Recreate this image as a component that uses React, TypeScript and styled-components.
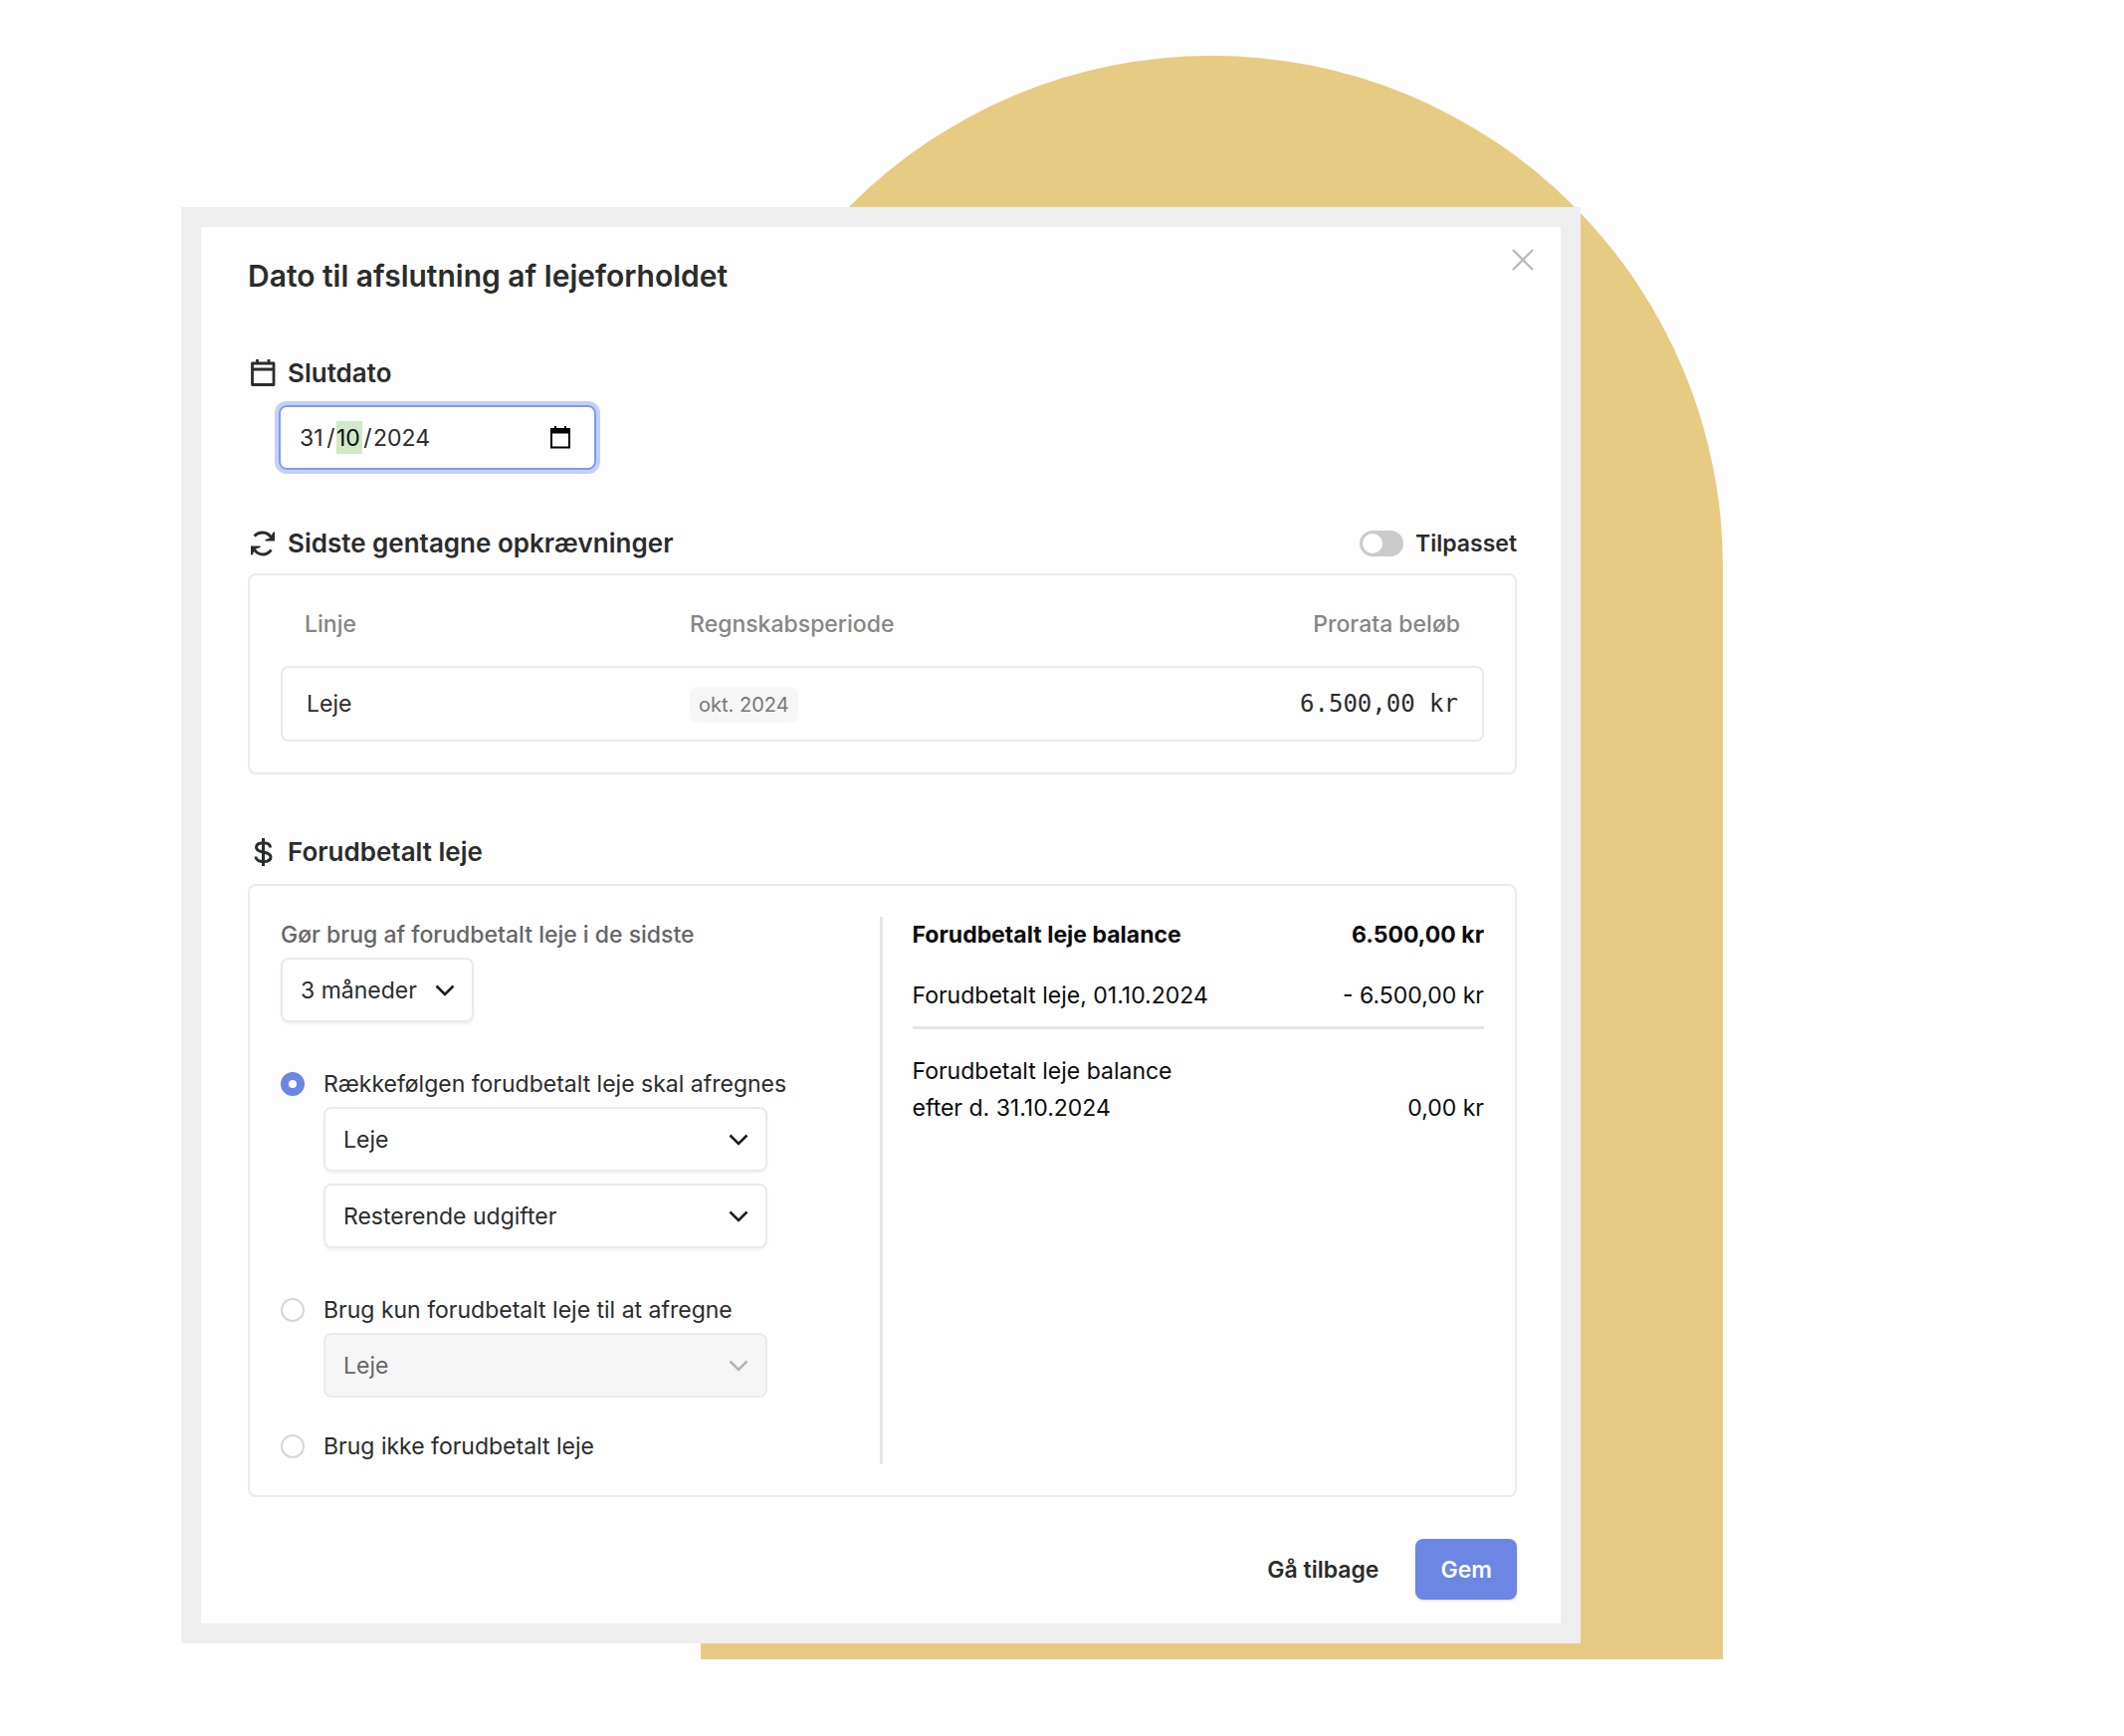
import React, { useId, useState } from "react";
import styled, { createGlobalStyle, css } from "styled-components";

const color = {
  ink: "#2b2c2c",
  black: "#0c0c0c",
  muted: "#868686",
  soft: "#666666",
  line: "#eaeaea",
  rule: "#e5e5e5",
  accent: "#6b86e3",
  frame: "#eeeeee",
  sand: "#e7cb83",
  tint: "#f6f6f6",
};

const GlobalStyle = createGlobalStyle`
  *, *::before, *::after { box-sizing: border-box; }
  body {
    margin: 0;
    background: #fefefe;
    color: ${color.ink};
    font-family: Inter, "Liberation Sans", sans-serif;
    font-size: 23px;
    line-height: 36px;
  }
  button, input, select { font: inherit; color: inherit; }
  h1, h2, p, fieldset, dl, dd { margin: 0; padding: 0; border: 0; min-width: 0; }
`;

const Stage = styled.main`
  position: relative;
  min-height: 100vh;
  padding: 208px 546px 92px 182px;
`;

const Arch = styled.div`
  position: absolute;
  top: 56px;
  bottom: 77px;
  left: 33%;
  right: 403px;
  border-radius: 514px 514px 0 0;
  background: ${color.sand};
`;

const Modal = styled.form`
  position: relative;
  border: 20px solid ${color.frame};
  background: #fefefe;
`;

const Header = styled.header`
  display: flex;
  justify-content: space-between;
  align-items: flex-start;
  padding: 22px 27px 0 47px;
`;

const Title = styled.h1`
  padding-top: 9px;
  font-size: 30px;
  line-height: 36px;
  font-weight: 600;
`;

const CloseButton = styled.button`
  display: flex;
  padding: 0;
  border: 0;
  background: none;
  color: #bcbcbc;
  cursor: pointer;
`;

const Body = styled.div`
  padding: 0 44px 24px 47px;
`;

const Section = styled.section<{ $top: number }>`
  margin-top: ${(p) => p.$top}px;
`;

const SectionHead = styled.div<{ $bottom: number }>`
  display: flex;
  align-items: center;
  justify-content: space-between;
  margin-bottom: ${(p) => p.$bottom}px;
`;

const Heading = styled.h2`
  display: flex;
  align-items: center;
  gap: 12px;
  font-size: 26px;
  line-height: 36px;
  font-weight: 600;
`;

const HeadingIcon = styled.svg`
  width: 28px;
  height: 28px;
  flex: none;
  fill: none;
  stroke: currentColor;
`;

const DateField = styled.fieldset`
  display: flex;
  align-items: center;
  width: 319px;
  height: 65px;
  margin-left: 31px;
  padding: 0 24px 0 19px;
  border: 2px solid #8399ea;
  border-radius: 8px;
  box-shadow: 0 0 0 4px #c5d0f6;
`;

const DatePart = styled.input<{ $width: number; $active?: boolean }>`
  width: ${(p) => p.$width}px;
  height: 33px;
  padding: 0;
  border: 0;
  outline: 0;
  background: ${(p) => (p.$active ? "#d0e9c9" : "transparent")};
  color: ${(p) => (p.$active ? color.black : color.ink)};
`;

const DateSlash = styled.span`
  width: 11px;
  text-align: center;
`;

const PickerButton = styled.button`
  display: flex;
  margin-left: auto;
  padding: 0;
  border: 0;
  background: none;
  color: #000;
`;

const SwitchLabel = styled.label`
  display: flex;
  align-items: center;
  gap: 12px;
  font-weight: 600;
`;

const Switch = styled.input`
  appearance: none;
  display: flex;
  width: 44px;
  height: 26px;
  margin: 0;
  padding: 3px;
  border-radius: 13px;
  background: #cbcbcb;

  &::before {
    content: "";
    width: 20px;
    height: 20px;
    border-radius: 50%;
    background: #fff;
  }
  &:checked {
    justify-content: flex-end;
    background: ${color.accent};
  }
`;

const Panel = styled.div`
  padding: 31px;
  border: 2px solid ${color.line};
  border-radius: 8px;
`;

const Table = styled.table`
  width: 100%;
  table-layout: fixed;
  border-collapse: separate;
  border-spacing: 0;
`;

const HeadCell = styled.th<{ $width: string; $end?: boolean }>`
  width: ${(p) => p.$width};
  height: 60px;
  padding: 0 24px 0 0;
  vertical-align: top;
  color: ${color.muted};
  font-weight: 500;
  text-align: ${(p) => (p.$end ? "right" : "left")};
  &:first-child { padding-left: 24px; }
`;

const Cell = styled.td`
  height: 76px;
  padding: 0;
  border: solid ${color.line};
  border-width: 2px 0;
  &:first-child {
    padding-left: 24px;
    border-left-width: 2px;
    border-radius: 8px 0 0 8px;
  }
  &:last-child {
    padding-right: 24px;
    border-right-width: 2px;
    border-radius: 0 8px 8px 0;
    font-family: "DejaVu Sans Mono", monospace;
    font-size: 24px;
    text-align: right;
  }
`;

const Badge = styled.span`
  display: inline-block;
  padding: 0 9px;
  border-radius: 8px;
  background: ${color.tint};
  color: #777;
  font-size: 20px;
  vertical-align: middle;
`;

const Split = styled(Panel)`
  display: grid;
  grid-template-columns: 1fr 1fr;
`;

const Options = styled.div`
  display: flex;
  flex-direction: column;
  border-right: 3px solid ${color.rule};
`;

const FieldLabel = styled.label`
  margin-bottom: 5px;
  color: ${color.soft};
  font-weight: 500;
`;

const Choice = styled.div<{ $top: number }>`
  display: grid;
  grid-template-columns: 24px 446px;
  column-gap: 19px;
  align-items: center;
  margin-top: ${(p) => p.$top}px;
`;

const Radio = styled.input`
  appearance: none;
  width: 24px;
  height: 24px;
  margin: 0;
  border: 2px solid #d6d6d6;
  border-radius: 50%;
  background: #fff;
  &:checked { border: 8px solid ${color.accent}; }
`;

const ChoiceLabel = styled.label`
  white-space: nowrap;
`;

const ChoiceFields = styled.div`
  grid-column: 2;
  display: grid;
  gap: 12px;
  margin-top: 5px;
`;

const SelectBox = styled.div<{ $width?: number }>`
  display: grid;
  align-items: center;
  width: ${(p) => (p.$width ? `${p.$width}px` : "100%")};
  & > * { grid-area: 1 / 1; }
`;

const NativeSelect = styled.select`
  appearance: none;
  width: 100%;
  height: 65px;
  padding: 0 44px 0 18px;
  border: 2px solid ${color.line};
  border-radius: 8px;
  background: #fff;
  box-shadow: 0 2px 3px rgba(0, 0, 0, 0.05);
  &:disabled {
    background: ${color.tint};
    color: ${color.soft};
    box-shadow: none;
    opacity: 1;
  }
`;

const Chevron = styled.svg<{ $dim?: boolean }>`
  justify-self: end;
  width: 20px;
  height: 12px;
  margin-right: 19px;
  fill: none;
  stroke: ${(p) => (p.$dim ? "#b5b5b5" : "#1c1c1c")};
  stroke-width: 2.6;
  pointer-events: none;
`;

const Balance = styled.dl`
  padding-left: 30px;
  color: ${color.black};
  line-height: 37px;
`;

const BalanceRow = styled.div<{ $strong?: boolean; $ruled?: boolean }>`
  display: flex;
  justify-content: space-between;
  align-items: flex-end;
  margin-bottom: 24px;
  ${(p) => p.$strong && css`font-weight: 700;`}
  ${(p) =>
    p.$ruled &&
    css`
      padding-bottom: 12px;
      border-bottom: 3px solid ${color.rule};
    `}
`;

const Footer = styled.footer`
  display: flex;
  justify-content: flex-end;
  gap: 12px;
  margin-top: 42px;
`;

const Button = styled.button<{ $primary?: boolean }>`
  height: 61px;
  padding: 0 25px;
  border: 0;
  border-radius: 8px;
  background: ${(p) => (p.$primary ? color.accent : "transparent")};
  color: ${(p) => (p.$primary ? "#fafbff" : color.ink)};
  box-shadow: ${(p) => (p.$primary ? "0 1px 3px rgba(60, 80, 180, 0.2)" : "none")};
  font-weight: 600;
`;

type SelectProps = { label?: string; id?: string; options: string[]; width?: number; disabled?: boolean };

function Select({ label, id, options, width, disabled }: SelectProps) {
  return (
    <SelectBox $width={width}>
      <NativeSelect id={id} aria-label={label} disabled={disabled}>
        {options.map((o) => (
          <option key={o}>{o}</option>
        ))}
      </NativeSelect>
      <Chevron viewBox="0 0 20 12" $dim={disabled} aria-hidden>
        <path d="M1.5 1.5 10 10l8.500-8.500" />
      </Chevron>
    </SelectBox>
  );
}

type OptionProps = {
  top: number;
  label: string;
  checked: boolean;
  onPick: () => void;
  children?: React.ReactNode;
};

function Option({ top, label, checked, onPick, children }: OptionProps) {
  const id = useId();
  return (
    <Choice $top={top}>
      <Radio id={id} type="radio" name="prepaid" checked={checked} onChange={onPick} />
      <ChoiceLabel htmlFor={id}>{label}</ChoiceLabel>
      {children && <ChoiceFields>{children}</ChoiceFields>}
    </Choice>
  );
}

export default function App() {
  const [mode, setMode] = useState("order");
  const expenses = ["Leje", "Resterende udgifter"];

  return (
    <>
      <GlobalStyle />
      <Stage>
        <Arch />
        <Modal onSubmit={(e) => e.preventDefault()}>
          <Header>
            <Title>Dato til afslutning af lejeforholdet</Title>
            <CloseButton type="button" aria-label="Luk">
              <svg width="22" height="22" viewBox="0 0 22 22" fill="none" stroke="currentColor" strokeWidth="2.4">
                <path d="M1 1l20 20M21 1L1 21" />
              </svg>
            </CloseButton>
          </Header>
          <Body>
            <Section $top={62}>
              <SectionHead $bottom={14}>
                <Heading>
                  <HeadingIcon viewBox="0 0 28 28" strokeWidth="2.8" strokeLinejoin="round">
                    <path d="M4.500 4h21.500v21.500H4.500zM4.500 10h21.500M9.500 0v4M21 0v4" />
                  </HeadingIcon>
                  Slutdato
                </Heading>
              </SectionHead>
              <DateField aria-label="Slutdato">
                <DatePart aria-label="Dag" $width={26} defaultValue="31" />
                <DateSlash>/</DateSlash>
                <DatePart aria-label="Måned" $width={26} $active defaultValue="10" />
                <DateSlash>/</DateSlash>
                <DatePart aria-label="År" $width={60} defaultValue="2024" />
                <PickerButton type="button" aria-label="Vælg dato">
                  <svg width="20" height="23" viewBox="0 0 20 23" fill="none" stroke="currentColor" strokeWidth="2">
                    <path d="M1 3h18v18.500H1z" />
                    <path d="M1 3h18v3.500H1zM5 0v3M15 0v3" fill="currentColor" />
                  </svg>
                </PickerButton>
              </DateField>
            </Section>

            <Section $top={56}>
              <SectionHead $bottom={12}>
                <Heading>
                  <HeadingIcon viewBox="0 0 28 28" strokeWidth="2.8">
                    <path d="M6.500 6.500C9 4 11.500 3 14.500 3c4.500 0 8 2.500 9.800 6.500" />
                    <path d="M27 2.500v9h-9.500v-1.500l5-1.500 3-6z" fill="currentColor" stroke="none" />
                    <path d="M23.500 20.500C21 23.500 18.500 25 15.500 25c-4.500 0-8-2.500-9.800-6.500" />
                    <path d="M3 25.500v-9h9.500v1.500l-5 1.500-3 6z" fill="currentColor" stroke="none" />
                  </HeadingIcon>
                  Sidste gentagne opkrævninger
                </Heading>
                <SwitchLabel>
                  <Switch type="checkbox" role="switch" />
                  Tilpasset
                </SwitchLabel>
              </SectionHead>
              <Panel>
                <Table>
                  <thead>
                    <tr>
                      <HeadCell $width="34%">Linje</HeadCell>
                      <HeadCell $width="33%">Regnskabsperiode</HeadCell>
                      <HeadCell $width="33%" $end>Prorata beløb</HeadCell>
                    </tr>
                  </thead>
                  <tbody>
                    <tr>
                      <Cell>Leje</Cell>
                      <Cell><Badge>okt. 2024</Badge></Cell>
                      <Cell>6.500,00 kr</Cell>
                    </tr>
                  </tbody>
                </Table>
              </Panel>
            </Section>

            <Section $top={60}>
              <SectionHead $bottom={14}>
                <Heading>
                  <HeadingIcon viewBox="0 0 28 28" strokeWidth="3">
                    <path d="M15.500 0v28" />
                    <path d="M22.500 9.500c0-3-2.800-4.800-7-4.800s-7 1.600-7 4.500c0 3 2.800 4 7 4.800s7.500 1.800 7.500 5-3.200 4.600-7.500 4.600-7.500-1.800-7.500-5" />
                  </HeadingIcon>
                  Forudbetalt leje
                </Heading>
              </SectionHead>
              <Split>
                <Options>
                  <FieldLabel htmlFor="months">Gør brug af forudbetalt leje i de sidste</FieldLabel>
                  <Select id="months" width={194} options={["3 måneder"]} />
                  <Option
                    top={44}
                    label="Rækkefølgen forudbetalt leje skal afregnes"
                    checked={mode === "order"}
                    onPick={() => setMode("order")}
                  >
                    <Select label="Første udgift" options={expenses} />
                    <Select label="Anden udgift" options={["Resterende udgifter"]} />
                  </Option>
                  <Option
                    top={44}
                    label="Brug kun forudbetalt leje til at afregne"
                    checked={mode === "only"}
                    onPick={() => setMode("only")}
                  >
                    <Select label="Udgift" options={expenses} disabled={mode !== "only"} />
                  </Option>
                  <Option
                    top={31}
                    label="Brug ikke forudbetalt leje"
                    checked={mode === "none"}
                    onPick={() => setMode("none")}
                  />
                </Options>
                <Balance>
                  <BalanceRow $strong>
                    <dt>Forudbetalt leje balance</dt>
                    <dd>6.500,00 kr</dd>
                  </BalanceRow>
                  <BalanceRow $ruled>
                    <dt>Forudbetalt leje, 01.10.2024</dt>
                    <dd>- 6.500,00 kr</dd>
                  </BalanceRow>
                  <BalanceRow>
                    <dt>
                      Forudbetalt leje balance
                      <br />
                      efter d. 31.10.2024
                    </dt>
                    <dd>0,00 kr</dd>
                  </BalanceRow>
                </Balance>
              </Split>
            </Section>

            <Footer>
              <Button type="button">Gå tilbage</Button>
              <Button type="submit" $primary>Gem</Button>
            </Footer>
          </Body>
        </Modal>
      </Stage>
    </>
  );
}
